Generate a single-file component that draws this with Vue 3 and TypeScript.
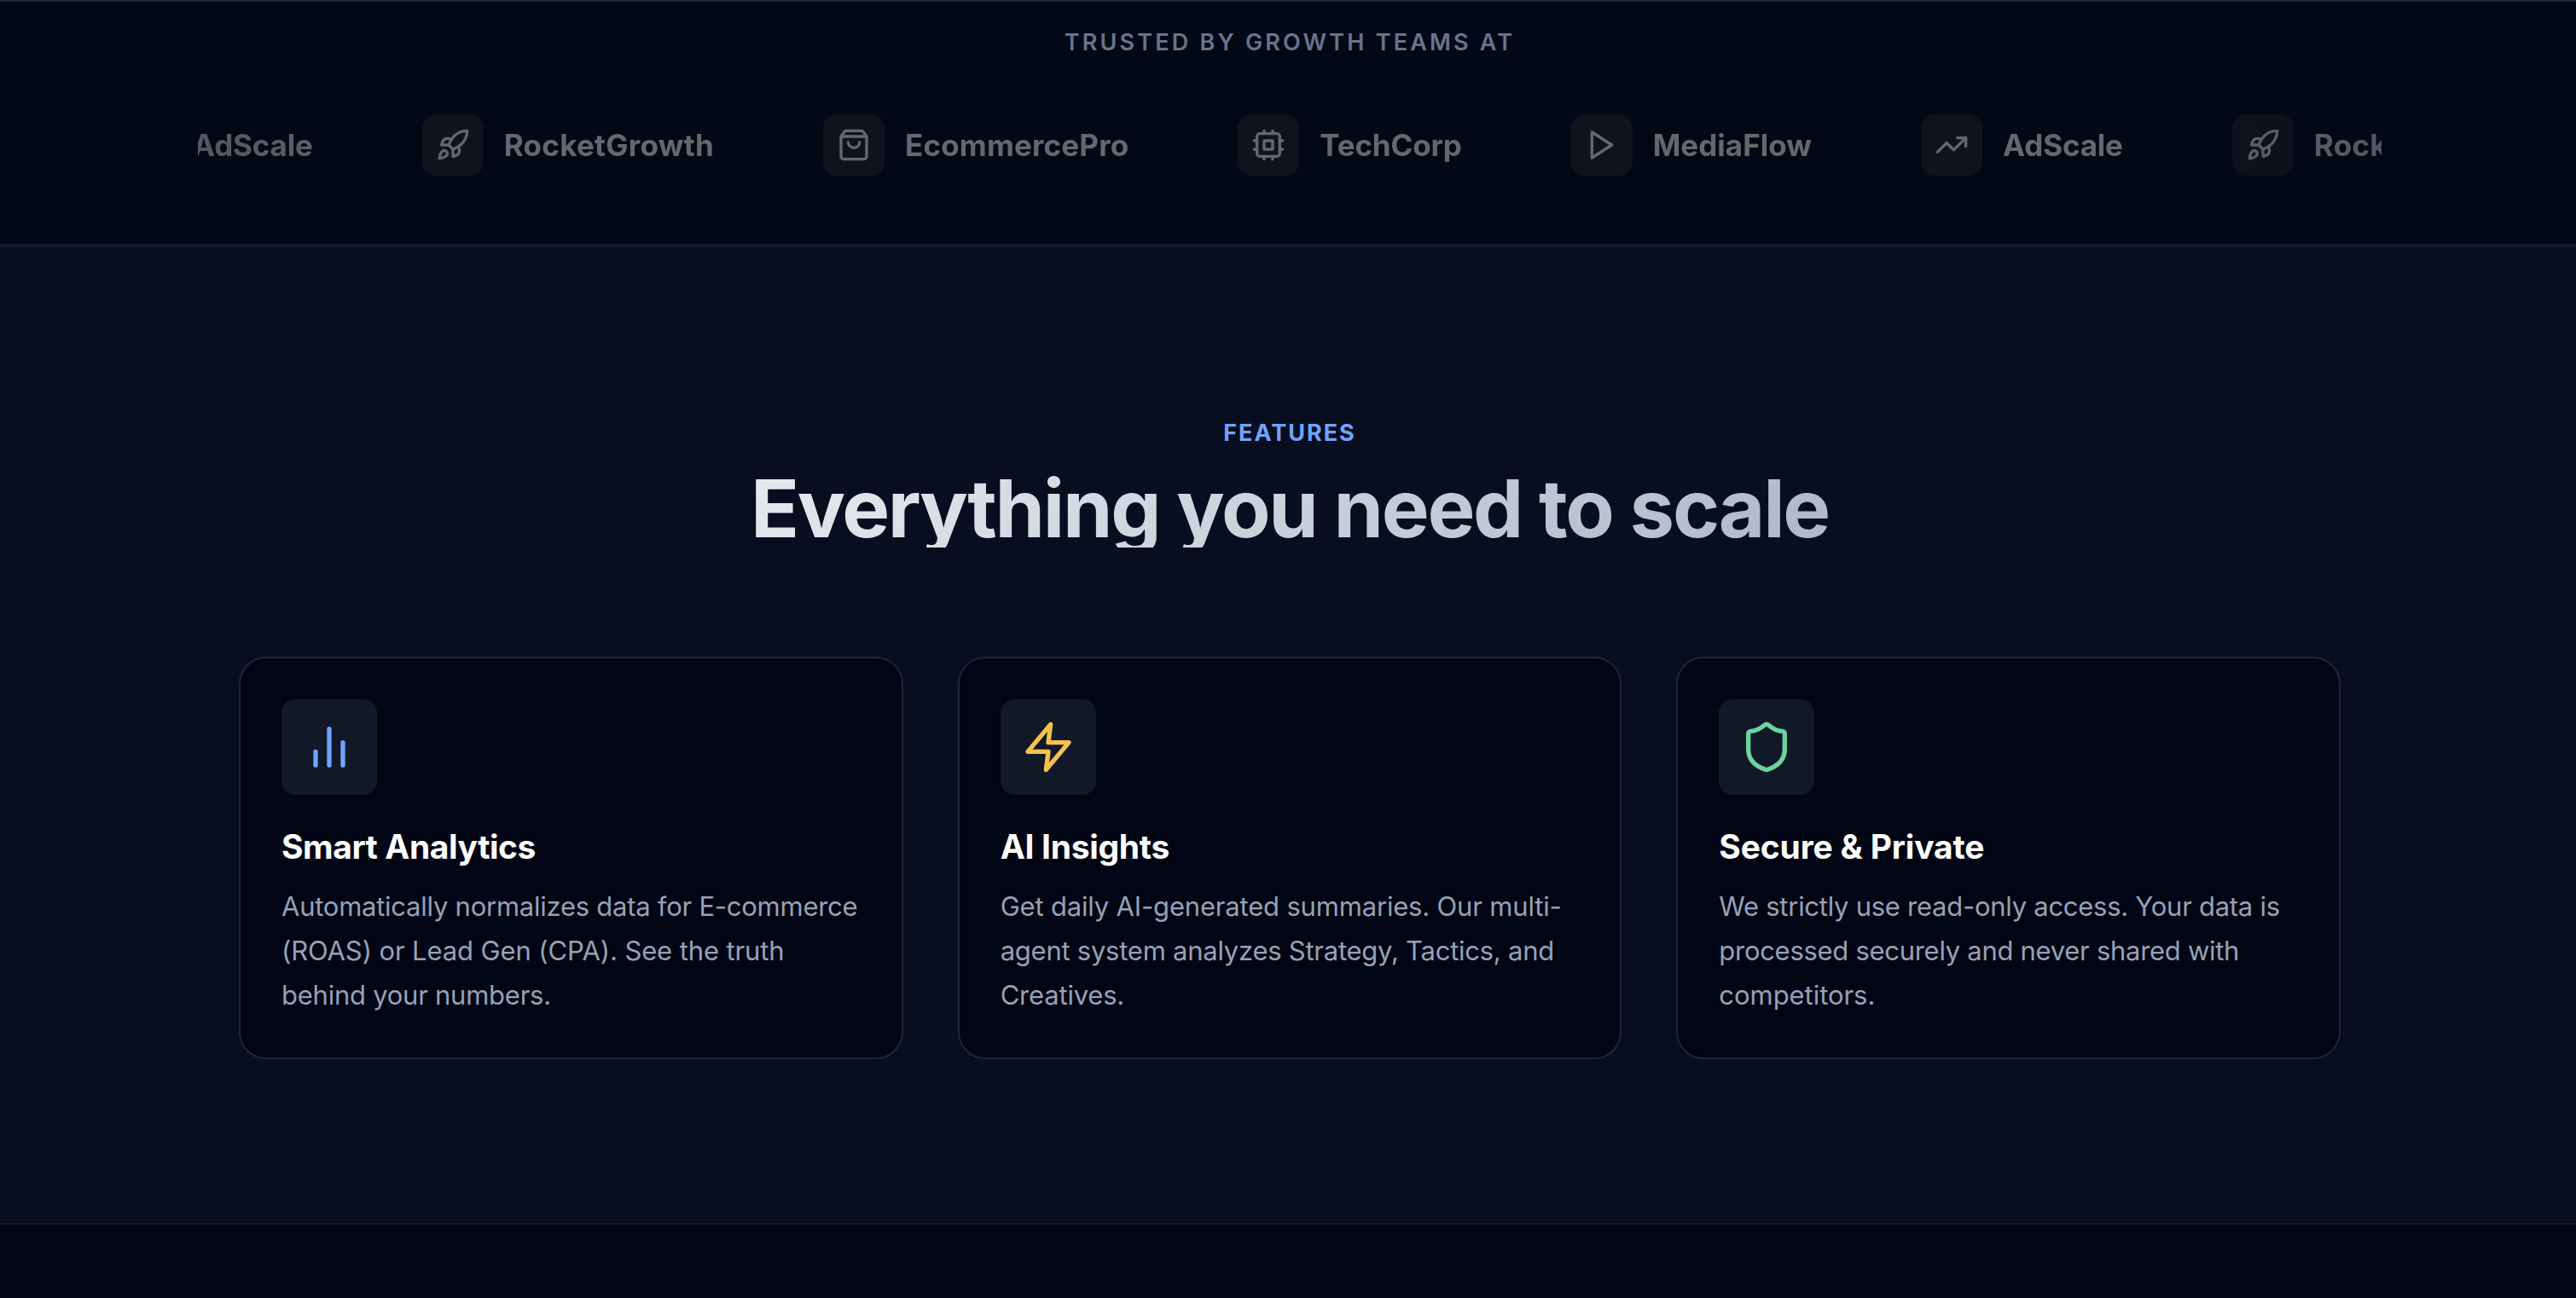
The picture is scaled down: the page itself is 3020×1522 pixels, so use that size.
<script setup lang="ts">
interface Brand {
  name: string
  icon: string
  spacing: number
}

interface Line {
  text: string
  spacing: number
}

interface Feature {
  title: Line
  lines: Line[]
  tone: string
  icon: string
}

const icons: Record<string, string[]> = {
  trend: ['M22 7 13.5 15.5 8.5 10.5 2 17', 'M16 7h6v6'],
  rocket: [
    'M4.5 16.5c-1.5 1.26-2 5-2 5s3.74-.5 5-2c.71-.84.7-2.13-.09-2.91a2.18 2.18 0 0 0-2.91-.09z',
    'm12 15-3-3a22 22 0 0 1 2-3.95A12.88 12.88 0 0 1 22 2c0 2.72-.78 7.5-6 11a22.35 22.35 0 0 1-4 2z',
    'M9 12H4s.55-3.03 2-4c1.62-1.08 5 0 5 0',
    'M12 15v5s3.03-.55 4-2c1.08-1.62 0-5 0-5',
  ],
  bag: ['M6 2 3 6v14a2 2 0 0 0 2 2h14a2 2 0 0 0 2-2V6l-3-4Z', 'M3 6h18', 'M16 10a4 4 0 0 1-8 0'],
  cpu: [
    'M6 4h12a2 2 0 0 1 2 2v12a2 2 0 0 1-2 2H6a2 2 0 0 1-2-2V6a2 2 0 0 1 2-2z',
    'M9 9h6v6H9z',
    'M15 2v2', 'M15 20v2', 'M2 15h2', 'M2 9h2', 'M20 15h2', 'M20 9h2', 'M9 2v2', 'M9 20v2',
  ],
  play: ['M5 3 19 12 5 21z'],
  bars: ['M18 20V10', 'M12 20V4', 'M6 20v-6'],
  zap: ['M13 2 3 14h9l-1 8 10-12h-9l1-8z'],
  shield: [
    'M20 13c0 5-3.5 7.5-7.66 8.95a1 1 0 0 1-.67-.01C7.5 20.5 4 18 4 13V6a1 1 0 0 1 1-1c2 0 4.5-1.2 6.24-2.72a1.17 1.17 0 0 1 1.52 0C14.51 3.81 17 5 19 5a1 1 0 0 1 1 1z',
  ],
}

const brands: Brand[] = [
  { name: 'AdScale', icon: 'trend', spacing: -0.17 },
  { name: 'RocketGrowth', icon: 'rocket', spacing: 0.28 },
  { name: 'EcommercePro', icon: 'bag', spacing: 0.16 },
  { name: 'TechCorp', icon: 'cpu', spacing: -0.18 },
  { name: 'MediaFlow', icon: 'play', spacing: 0.03 },
  { name: 'AdScale', icon: 'trend', spacing: -0.17 },
  { name: 'RocketGrowth', icon: 'rocket', spacing: 0.28 },
]

const features: Feature[] = [
  {
    title: { text: 'Smart Analytics', spacing: -0.45 },
    lines: [
      { text: 'Automatically normalizes data for E-commerce', spacing: -0.25 },
      { text: '(ROAS) or Lead Gen (CPA). See the truth', spacing: -0.11 },
      { text: 'behind your numbers.', spacing: -0.25 },
    ],
    tone: 'blue',
    icon: 'bars',
  },
  {
    title: { text: 'AI Insights', spacing: -0.3 },
    lines: [
      { text: 'Get daily AI-generated summaries. Our multi-', spacing: -0.18 },
      { text: 'agent system analyzes Strategy, Tactics, and', spacing: -0.25 },
      { text: 'Creatives.', spacing: -0.2 },
    ],
    tone: 'amber',
    icon: 'zap',
  },
  {
    title: { text: 'Secure & Private', spacing: -0.17 },
    lines: [
      { text: 'We strictly use read-only access. Your data is', spacing: -0.27 },
      { text: 'processed securely and never shared with', spacing: -0.29 },
      { text: 'competitors.', spacing: -0.05 },
    ],
    tone: 'green',
    icon: 'shield',
  },
]

const tracking = (px: number) => ({ letterSpacing: `${px}px` })
</script>

<template>
  <div class="viewport">
    <main class="page">
      <section class="trusted">
        <p class="trusted-label">TRUSTED BY GROWTH TEAMS AT</p>
        <div class="marquee">
          <div class="track">
            <div v-for="(b, i) in brands" :key="i" class="brand">
              <span class="brand-icon">
                <svg viewBox="0 0 24 24"><path v-for="d in icons[b.icon]" :key="d" :d="d" /></svg>
              </span>
              <span class="brand-name" :style="tracking(b.spacing)">{{ b.name }}</span>
            </div>
          </div>
        </div>
      </section>
      <section class="features">
        <p class="eyebrow">FEATURES</p>
        <h2 class="headline">Everything you need to scale</h2>
        <div class="cards">
          <article v-for="f in features" :key="f.icon" class="card">
            <div class="card-icon" :class="f.tone">
              <svg viewBox="0 0 24 24"><path v-for="d in icons[f.icon]" :key="d" :d="d" /></svg>
            </div>
            <h3 :style="tracking(f.title.spacing)">{{ f.title.text }}</h3>
            <p><span v-for="l in f.lines" :key="l.text" :style="tracking(l.spacing)">{{ l.text }}</span></p>
          </article>
        </div>
      </section>
    </main>
  </div>
</template>

<style>
body {
  background: #020514;
}
</style>

<style scoped>
.viewport {
  width: 3020px;
  height: 1522px;
  overflow: hidden;
  background: #020514;
  font-family: Inter, 'Liberation Sans', sans-serif;
}
.page {
  width: 3024px;
}
p, h2, h3 {
  margin: 0;
}
svg {
  display: block;
  fill: none;
  stroke: currentColor;
  stroke-width: 2;
  stroke-linecap: round;
  stroke-linejoin: round;
}
.trusted {
  box-sizing: border-box;
  height: 288px;
  border-top: 2px solid #1f293a;
  border-bottom: 2px solid #131a2b;
  background: #030817;
  padding-top: 28px;
}
.trusted-label {
  text-align: center;
  font-size: 27px;
  line-height: 40px;
  font-weight: 600;
  letter-spacing: 3.18px;
  color: #67748b;
}
.marquee {
  width: 2560px;
  margin: 64px auto 0;
  overflow: hidden;
  -webkit-mask-image: linear-gradient(to right, rgba(0, 0, 0, 0.82), #000 10%, #000 90%, rgba(0, 0, 0, 0.82));
  mask-image: linear-gradient(to right, rgba(0, 0, 0, 0.82), #000 10%, #000 90%, rgba(0, 0, 0, 0.82));
}
.track {
  display: flex;
  gap: 128px;
  width: max-content;
  margin-left: -102px;
}
.brand {
  display: flex;
  align-items: center;
  gap: 24px;
  color: #66676c;
}
.brand-icon {
  display: flex;
  align-items: center;
  justify-content: center;
  width: 72px;
  height: 72px;
  border-radius: 16px;
  background: #0f131c;
}
.brand-icon svg {
  width: 40px;
  height: 40px;
}
.brand-name {
  font-size: 35px;
  line-height: 56px;
  font-weight: 700;
}
.features {
  box-sizing: border-box;
  height: 1148px;
  border-top: 2px solid #131a2b;
  border-bottom: 2px solid #151a2b;
  background: #080d1f;
  padding: 198px 280px 0;
}
.eyebrow {
  text-align: center;
  font-size: 27px;
  line-height: 40px;
  font-weight: 700;
  letter-spacing: 2px;
  color: #70a4f8;
}
.headline {
  height: 96px;
  margin-top: 18px;
  text-align: center;
  font-size: 94px;
  line-height: 100px;
  font-weight: 700;
  letter-spacing: -2.29px;
  color: transparent;
  background: linear-gradient(135deg, #fff, #94a3b8);
  -webkit-background-clip: text;
  background-clip: text;
}
.cards {
  display: grid;
  grid-template-columns: repeat(3, minmax(0, 1fr));
  gap: 64px;
  margin-top: 128px;
}
.card {
  box-sizing: border-box;
  height: 472px;
  border: 2px solid #1f2636;
  border-radius: 32px;
  background: #020514;
  padding: 48px;
}
.card-icon {
  display: flex;
  align-items: center;
  justify-content: center;
  width: 112px;
  height: 112px;
  border-radius: 16px;
  background: #111827;
}
.card-icon svg {
  width: 64px;
  height: 64px;
}
.blue {
  color: #72a5fa;
}
.amber {
  color: #f5c34b;
}
.green {
  color: #6bd3a0;
}
h3 {
  margin-top: 33px;
  font-size: 39px;
  line-height: 56px;
  font-weight: 700;
  color: #fff;
}
.card p {
  margin-top: 16px;
  font-size: 31px;
  line-height: 52px;
  color: #95a2b6;
}
.card p span {
  display: block;
  white-space: nowrap;
}
</style>
